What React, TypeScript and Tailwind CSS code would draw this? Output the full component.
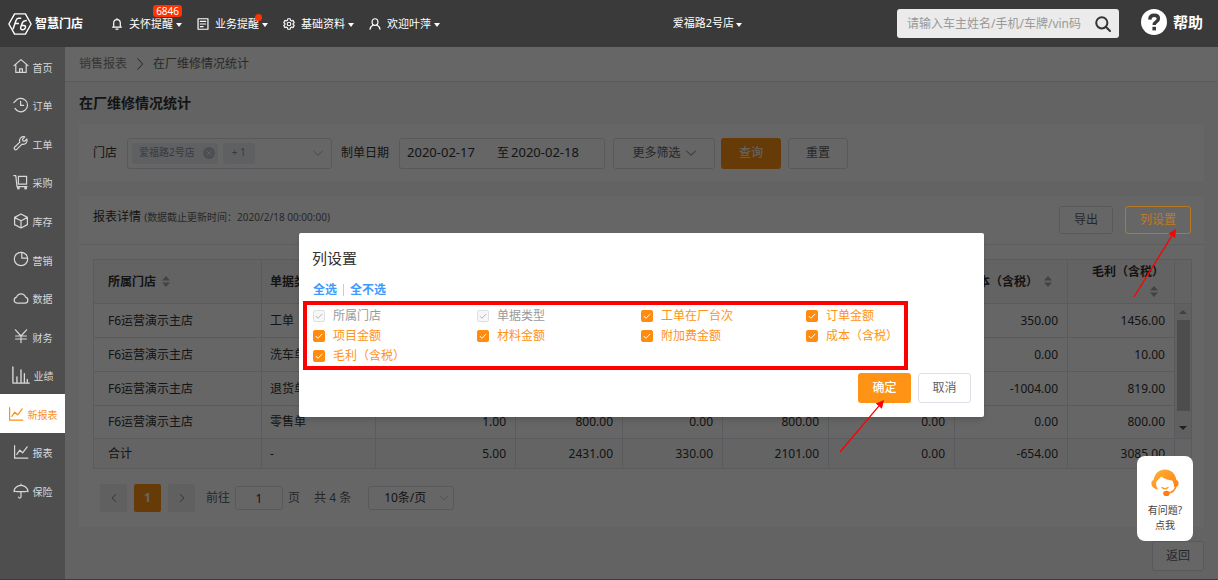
import { useState } from 'react';
import type { ReactNode } from 'react';
import clsx from 'clsx';

type IconProps = { className?: string };

function Icon({ className, children }: { className?: string; children: ReactNode }) {
  return (
    <svg
      viewBox="0 0 16 16"
      className={clsx('shrink-0', className ?? 'h-4 w-4')}
      fill="none"
      stroke="currentColor"
      strokeWidth="1.2"
      strokeLinecap="round"
      strokeLinejoin="round"
      aria-hidden="true"
    >
      {children}
    </svg>
  );
}

const HomeIcon = () => (
  <Icon>
    <path d="M1 7.6 8 1.6l7 6M2.8 6.4v8h10.4v-8M6.6 14.2v-3.4h2.8v3.4" />
  </Icon>
);
const HistoryIcon = () => (
  <Icon>
    <path d="M2.2 4.4A6.7 6.7 0 1 1 2 11.4M.8 5.6l1.4-1.4M7.6 4.4v4h3" />
  </Icon>
);
const WrenchIcon = () => (
  <Icon>
    <path d="M13.9 4 11.6 6.2 9.9 5.8 9.6 4.2l2.2-2.3a4 4 0 0 0-5 5.2l-5.2 5.1a1.4 1.4 0 0 0 2.2 2.2l5.2-5.2A4 4 0 0 0 13.9 4Z" />
  </Icon>
);
const TrolleyIcon = () => (
  <Icon>
    <path d="M.8 1.6h2l1.2 11h10M5.4 2.4h8.2v7.8H5.4Z" />
    <circle cx="5.4" cy="14" r=".9" />
    <circle cx="12.6" cy="14" r=".9" />
  </Icon>
);
const BoxIcon = () => (
  <Icon>
    <path d="M8 1 14.4 4.4v7.2L8 15 1.6 11.6V4.4ZM1.8 4.6 8 7.8l6.2-3.2M8 7.8V15" />
  </Icon>
);
const PieIcon = () => (
  <Icon>
    <circle cx="8" cy="8" r="6.7" />
    <path d="M8.8 1.4v5.8h5.6" />
  </Icon>
);
const CloudIcon = () => (
  <Icon>
    <path d="M4 13.2a3.1 3.1 0 0 1-.4-6.1 4.7 4.7 0 0 1 8.9 0A3.1 3.1 0 0 1 12 13.2Z" />
  </Icon>
);
const YenIcon = () => (
  <Icon>
    <path d="M2.4 1.8 8 8l5.6-6.2M8 8v6.6M2.6 8h10.8M2.6 11h10.8" />
  </Icon>
);
const BarsIcon = () => (
  <Icon className="h-[18px] w-[18px]">
    <path d="M.8.8v14.4h14.6M4.4 15V9.6M8 15V3.4M11 15V6.8M13.6 15v-3" />
  </Icon>
);
const LineIcon = () => (
  <Icon>
    <path d="M1.6 1.6v12.6h13.2M3.8 10.4l3-4.2 2.8 2.6 4.6-6" />
  </Icon>
);
const UmbrellaIcon = () => (
  <Icon>
    <path d="M1 8.6a7 6.2 0 0 1 14 0c-1.400-.6-2.400-.5-3.400.2M1 8.600c1.400-.6 2.400-.5 3.400.2M4.400 8.600h7M8 1v1.400M8 8.600v5a1.200 1.200 0 0 1-2.400.4" />
  </Icon>
);

const BellIcon = ({ className }: IconProps) => (
  <Icon className={className}>
    <path d="M3.600 12V6.600a4.400 4.400 0 0 1 8.800 0V12M2.200 12.200h11.600M6.600 14.800h2.800M8 2.200V.8" strokeWidth="1.6" />
  </Icon>
);
const NoteIcon = ({ className }: IconProps) => (
  <Icon className={className}>
    <path d="M1.4 1h13.2v14H1.4ZM4.4 4.6h7.2M4.4 8h7.2M4.4 11.4h3.8" strokeWidth="1.6" />
  </Icon>
);
const GearIcon = ({ className }: IconProps) => (
  <Icon className={className}>
    <circle cx="8" cy="8" r="2.4" strokeWidth="1.5" />
    <path
      d="m6.4 1-.4 2-1.5.9-2-.7L1 6l1.5 1.3v1.5L1 10l1.5 2.8 2-.7L6 13l.4 2h3.2l.4-2 1.5-.9 2 .7L15 10l-1.5-1.3V7.3L15 6l-1.5-2.8-2 .7L10 3 9.6 1Z"
      strokeWidth="1.5"
    />
  </Icon>
);
const UserIcon = ({ className }: IconProps) => (
  <Icon className={className}>
    <ellipse cx="8" cy="5.4" rx="3.9" ry="4.4" strokeWidth="1.6" />
    <path d="M1.4 15c.3-2.7 2-4.4 4-5.6M14.6 15c-.3-2.7-2-4.4-4-5.6" strokeWidth="1.6" />
  </Icon>
);
const ChevronDown = ({ className }: IconProps) => (
  <Icon className={className ?? 'h-2.5 w-2.5'}>
    <path d="m1 5 7 6.6L15 5" strokeWidth="1.5" />
  </Icon>
);

function Caret() {
  return <span className="mt-[3px] border-x-[3px] border-t-[4px] border-x-transparent border-t-current" />;
}

const NAV = [
  { label: '首页', icon: <HomeIcon /> },
  { label: '订单', icon: <HistoryIcon /> },
  { label: '工单', icon: <WrenchIcon /> },
  { label: '采购', icon: <TrolleyIcon /> },
  { label: '库存', icon: <BoxIcon /> },
  { label: '营销', icon: <PieIcon /> },
  { label: '数据', icon: <CloudIcon /> },
  { label: '财务', icon: <YenIcon /> },
  { label: '业绩', icon: <BarsIcon /> },
  { label: '新报表', icon: <LineIcon />, active: true },
  { label: '报表', icon: <LineIcon /> },
  { label: '保险', icon: <UmbrellaIcon /> },
];

const HEADERS = ['所属门店', '单据类型', '', '', '', '', '', '成本（含税）', '毛利（含税）'];

const ROWS = [
  ['F6运营演示主店', '工单', '', '', '', '', '', '350.00', '1456.00'],
  ['F6运营演示主店', '洗车单', '', '', '', '', '', '0.00', '10.00'],
  ['F6运营演示主店', '退货单', '', '', '', '', '', '-1004.00', '819.00'],
  ['F6运营演示主店', '零售单', '1.00', '800.00', '0.00', '800.00', '0.00', '0.00', '800.00'],
];

const TOTAL = ['合计', '-', '5.00', '2431.00', '330.00', '2101.00', '0.00', '-654.00', '3085.00'];

const COLUMNS = [
  { id: 'store', label: '所属门店', locked: true },
  { id: 'type', label: '单据类型', locked: true },
  { id: 'count', label: '工单在厂台次' },
  { id: 'order', label: '订单金额' },
  { id: 'item', label: '项目金额' },
  { id: 'material', label: '材料金额' },
  { id: 'extra', label: '附加费金额' },
  { id: 'cost', label: '成本（含税）' },
  { id: 'profit', label: '毛利（含税）' },
];

export default function App() {
  return (
    <div className="flex min-h-screen flex-col border-b border-[#3a3a3a] bg-[#4e4e4e] font-['Noto_Sans','Noto_Sans_CJK_SC',sans-serif] text-xs">
      <TopBar />
      <div className="flex flex-1">
        <Sidebar />
        <main className="relative min-w-0 flex-1 bg-[#f7f7f7] text-[#333]">
          <ReportPage />
          <div className="absolute inset-0 z-10 bg-black/60" />
          <ColumnDialog />
          <HelpWidget />
        </main>
      </div>
    </div>
  );
}

function TopBar() {
  return (
    <header className="flex h-[47px] items-center bg-[#3a3a3a] pr-[15px] pl-2 text-[11px] text-white">
      <a href="#" className="flex items-center gap-[3px]">
        <svg viewBox="0 0 24 22" className="h-[22px] w-6" fill="none" stroke="currentColor" strokeWidth="1.4" strokeLinejoin="round">
          <path d="M6.6.9h10.8L23.1 11l-5.7 10.1H6.6L.9 11Z" />
          <path d="M5 16.2 8 7.4c.5-1.5 1.1-2.2 2.4-2.2h2.8M6.8 10.4H11M18.800 7.600l-1.600.1c-1.600.1-2.400.8-2.900 2.200l-1.500 4.200c-.5 1.700.2 2.700 1.700 2.700s2.500-.8 2.900-2.200c.4-1.300-.2-2.200-1.500-2.200h-2.100" strokeWidth="1.5" />
        </svg>
        <span className="text-xs font-bold">智慧门店</span>
      </a>

      <nav className="ml-7 flex flex-1 items-center gap-[15px]">
        <TopMenu icon={<BellIcon className="h-3 w-3" />} label="关怀提醒" badge="6846" />
        <TopMenu icon={<NoteIcon className="h-3 w-3" />} label="业务提醒" dot />
        <TopMenu icon={<GearIcon className="h-3 w-3" />} label="基础资料" />
        <TopMenu icon={<UserIcon className="h-3 w-3" />} label="欢迎叶萍" />
      </nav>

      <button className="mr-[155px] flex items-center gap-[2px]">
        爱福路2号店
        <Caret />
      </button>

      <label className="flex h-[29px] w-[222px] items-center rounded-[3px] bg-[#ebebeb] pr-2 pl-2.5">
        <input
          type="text"
          aria-label="搜索"
          placeholder="请输入车主姓名/手机/车牌/vin码"
          className="min-w-0 flex-1 bg-transparent text-xs text-[#333] outline-none placeholder:text-[#999]"
        />
        <svg viewBox="0 0 16 16" className="h-4 w-4 shrink-0 text-[#333]" fill="none" stroke="currentColor" strokeWidth="2" strokeLinecap="round">
          <circle cx="6.8" cy="6.8" r="5.6" />
          <path d="m11 11 4 4" />
        </svg>
      </label>

      <a href="#" className="ml-[22px] flex items-center gap-[6px] pb-1 text-[15px] leading-[22px] font-bold">
        <svg viewBox="0 0 26 26" className="h-[26px] w-[26px]">
          <circle cx="13" cy="13" r="13" fill="#fff" />
          <path d="M8.8 10.6c.1-2.9 1.8-4.3 4.4-4.3 2.5 0 4.2 1.3 4.2 3.4 0 3-4.2 2.8-4.2 6.3" fill="none" stroke="#3a3a3a" strokeWidth="3.4" />
          <rect x="11.4" y="17.8" width="3.6" height="3.6" fill="#3a3a3a" />
        </svg>
        帮助
      </a>
    </header>
  );
}

function TopMenu({ icon, label, badge, dot }: { icon: ReactNode; label: string; badge?: string; dot?: boolean }) {
  return (
    <button className="relative flex items-center gap-[6px] leading-[14px]">
      {icon}
      <span className="flex items-center gap-[3px]">
        {label}
        <Caret />
      </span>
      {badge && (
        <span className="absolute right-0 bottom-full rounded-[3px] bg-[#ff3300] px-[3px] text-[10px] leading-[12px]">{badge}</span>
      )}
      {dot && <span className="absolute -top-[3px] right-[6px] h-[7px] w-[7px] rounded-full bg-[#ff3300]" />}
    </button>
  );
}

function Sidebar() {
  return (
    <aside className="w-[65px] shrink-0 text-[10px] text-[#d8d8d8]">
      <nav className="grid h-[463px] auto-rows-fr">
        {NAV.map((item) => (
          <a
            key={item.label}
            href="#"
            className={clsx('flex items-center justify-center gap-1', item.active && 'bg-white text-[#ff8f14]')}
          >
            {item.icon}
            <span className="pt-1">{item.label}</span>
          </a>
        ))}
      </nav>
    </aside>
  );
}

function ReportPage() {
  return (
    <>
      <nav className="flex h-[35px] items-center gap-[7px] border-b border-[#e2e2e2] bg-white px-[14px]">
        <a href="#" className="text-[#888]">销售报表</a>
        <Icon className="h-3 w-3 -rotate-90 text-[#777]">
          <path d="m1 5 7 6.6L15 5" strokeWidth="1.4" />
        </Icon>
        <span className="text-[#666]">在厂维修情况统计</span>
      </nav>

      <div className="px-[14px]">
        <h1 className="flex h-[42px] items-center text-sm font-bold">在厂维修情况统计</h1>
        <FilterBar />
        <section className="mt-[14px] bg-white">
          <div className="flex h-[49px] items-center justify-between border-b border-[#ebebeb] pr-[13px] pl-[14px]">
            <h2 className="-mt-1.5">
              报表详情 <small className="text-[10px] text-[#666]">(数据截止更新时间：2020/2/18 00:00:00)</small>
            </h2>
            <div className="flex gap-3">
              <button className="h-7 w-[54px] rounded-[3px] border border-[#dcdfe6] text-[#606266]">导出</button>
              {/* stays above the mask so it can be pointed at */}
              <div className="relative z-20">
                <button className="h-7 w-[66px] rounded-[3px] border border-[#b87822] bg-[#666] text-[#c27a1e]">列设置</button>
                <Arrow className="absolute top-[22px] left-2 h-[70px] w-11" width={44} height={70} />
              </div>
            </div>
          </div>
          <div className="px-[14px] pt-[14px]">
            <ReportTable />
            <Pagination />
          </div>
        </section>
        <div className="flex justify-end pt-[14px] pb-2">
          <button className="h-[30px] rounded-[3px] border border-[#dcdfe6] bg-white px-[13px] text-[#606266]">返回</button>
        </div>
      </div>
    </>
  );
}

function FilterBar() {
  return (
    <section className="flex h-[58px] items-center bg-white px-[14px]">
      <span id="store-label">门店</span>
      <button
        role="combobox"
        aria-expanded="false"
        aria-controls="store-list"
        aria-labelledby="store-label"
        className="ml-2.5 flex h-[31px] w-[205px] items-center gap-[5px] rounded-[3px] border border-[#dcdfe6] pr-2 pl-1 text-[10px] text-[#909399]"
      >
        <span className="flex h-[21px] items-center gap-2 rounded-[3px] bg-[#eef1f6] pr-[3px] pl-[7px]">
          爱福路2号店
          <svg viewBox="0 0 12 12" className="h-3 w-3">
            <circle cx="6" cy="6" r="6" fill="#c0c4cc" />
            <path d="m3.6 3.6 4.8 4.8M8.4 3.6 3.6 8.4" stroke="#eef1f6" />
          </svg>
        </span>
        <span className="flex h-[21px] w-8 items-center justify-center rounded-[3px] bg-[#eef1f6]">+ 1</span>
        <ChevronDown className="ml-auto h-2.5 w-2.5 text-[#b0b4bc]" />
      </button>

      <label htmlFor="date-from" className="ml-[9px]">制单日期</label>
      <div className="ml-2.5 flex h-[31px] w-[206px] items-center rounded-[3px] border border-[#dcdfe6] pl-[7px] text-[13px]">
        <input id="date-from" type="text" defaultValue="2020-02-17" className="w-[90px] outline-none" />
        <span className="text-xs">至</span>
        <input type="text" aria-label="结束日期" defaultValue="2020-02-18" className="w-[80px] pl-0.5 outline-none" />
      </div>

      <button className="ml-2 flex h-[31px] w-[102px] items-center justify-center gap-[5px] rounded-[3px] border border-[#dcdfe6] text-[#606266]">
        更多筛选
        <ChevronDown />
      </button>
      <button className="ml-1.5 h-[31px] w-[60px] rounded-[3px] bg-[#ff9316] text-white">查询</button>
      <button className="ml-[7px] h-[31px] w-[60px] rounded-[3px] border border-[#dcdfe6] text-[#606266]">重置</button>
    </section>
  );
}

function SortIcon({ className }: IconProps) {
  return (
    <svg viewBox="0 0 8 11" className={clsx('inline-block h-[11px] w-2 shrink-0', className)} fill="#a5a8af">
      <path d="M4 0 8 4.6H0ZM4 11 0 6.4h8Z" />
    </svg>
  );
}

function ReportTable() {
  const cell = 'border border-[#e2e4ea] p-0';
  return (
    <table className="w-full table-fixed border-collapse border border-[#dcdfe6]">
      <colgroup>
        <col className="w-[168px]" />
        <col className="w-[114px]" />
        <col className="w-[140px]" />
        <col className="w-[107px]" />
        <col className="w-[100px]" />
        <col className="w-[106px]" />
        <col className="w-[126px]" />
        <col className="w-[113px]" />
        <col className="w-[107px]" />
        <col className="w-[17px]" />
      </colgroup>
      <thead className="bg-[#f7f7f8]">
        <tr className="h-11">
          {HEADERS.map((h, i) => (
            <th key={i} className={cell}>
              {h && (
                <div
                  className={clsx(
                    'flex items-center whitespace-nowrap',
                    i === 0 && 'gap-[6px] pl-[14px]',
                    i === 1 && 'gap-[6px] pl-2',
                    i === 7 && 'justify-end gap-[6px] pr-[15px]',
                    i === 8 && 'flex-col items-end pr-[10px] leading-[20px]'
                  )}
                >
                  {h}
                  <SortIcon className={clsx(i === 8 && 'my-1 mr-[6px]')} />
                </div>
              )}
            </th>
          ))}
          <th className={cell} />
        </tr>
      </thead>
      <tbody>
        {ROWS.map((row, r) => (
          <tr key={row[1]} className={r === 3 ? 'h-[33px]' : 'h-[34px]'}>
            {row.map((value, i) => (
              <td key={i} className={clsx(cell, i === 0 && 'pl-[14px]', i === 1 && 'pl-2', i > 1 && 'pr-[9px] text-right')}>
                {value}
              </td>
            ))}
            {r === 0 && (
              <td rowSpan={4} className="h-px bg-[#f1f1f1] p-0">
                <div className="flex h-full flex-col items-center pt-[6px] pb-2">
                  <span className="border-x-[4px] border-b-[4px] border-x-transparent border-b-[#a3a3a3]" />
                  <span className="mt-[6px] h-[91px] w-[13px] bg-[#c1c1c1]" />
                  <span className="mt-auto border-x-[4px] border-t-[4px] border-x-transparent border-t-[#505050]" />
                </div>
              </td>
            )}
          </tr>
        ))}
      </tbody>
      <tfoot className="bg-[#fafafb]">
        <tr className="h-[30px]">
          {TOTAL.map((value, i) => (
            <td key={i} className={clsx(cell, i === 0 && 'pl-[14px]', i === 1 && 'pl-2', i > 1 && 'pr-[9px] text-right')}>
              {value}
            </td>
          ))}
          <td className={cell} />
        </tr>
      </tfoot>
    </table>
  );
}

function Pagination() {
  const square = 'flex h-7 w-[27px] items-center justify-center rounded-[2px]';
  return (
    <div className="flex h-[58px] items-center pl-[7px] text-[#606266]">
      <button aria-label="上一页" className={clsx(square, 'bg-[#f0f0f2]')}>
        <ChevronDown className="h-2 w-2 rotate-90" />
      </button>
      <button className={clsx(square, 'ml-[7px] bg-[#ff9316] font-bold text-white')}>1</button>
      <button aria-label="下一页" className={clsx(square, 'ml-[7px] bg-[#f0f0f2]')}>
        <ChevronDown className="h-2 w-2 -rotate-90" />
      </button>
      <label className="ml-[11px] flex items-center gap-[5px]">
        前往
        <input
          type="text"
          defaultValue="1"
          className="h-6 w-12 rounded-[3px] border border-[#dcdfe6] text-center text-[#333] outline-none"
        />
        页
      </label>
      <span className="ml-[14px]">共 4 条</span>
      <div className="relative ml-[17px]">
        <select
          aria-label="每页条数"
          className="h-6 w-[86px] appearance-none rounded-[3px] border border-[#dcdfe6] pl-[15px] text-[#333] outline-none"
        >
          <option>10条/页</option>
          <option>20条/页</option>
        </select>
        <ChevronDown className="pointer-events-none absolute top-2 right-1.5 h-2 w-2 text-[#b0b4bc]" />
      </div>
    </div>
  );
}

function ColumnDialog() {
  const [shown, setShown] = useState(COLUMNS.map((c) => c.id));

  const toggle = (id: string) =>
    setShown((list) => (list.includes(id) ? list.filter((x) => x !== id) : [...list, id]));

  return (
    <div className="absolute inset-x-0 top-0 z-20 flex justify-center pt-[186px]">
      <div role="dialog" aria-labelledby="columns-title" className="relative w-[685px] rounded-[2px] bg-white shadow-md">
        <h2 id="columns-title" className="px-[13px] pt-[14px] text-[15px] leading-[22px]">
          列设置
        </h2>
        <div className="flex items-center gap-[6px] px-[14px] pt-3 leading-[18px] font-bold text-[#3d9bff]">
          <button onClick={() => setShown(COLUMNS.map((c) => c.id))}>全选</button>
          <span className="h-3 w-px bg-[#ccc]" />
          <button onClick={() => setShown(COLUMNS.filter((c) => c.locked).map((c) => c.id))}>全不选</button>
        </div>

        <div className="mt-0.5 ml-1 grid w-[605px] grid-cols-[164px_164px_165px_auto] border-4 border-[#ff0000] pt-px pl-[6px]">
          {COLUMNS.map((c) => {
            const on = shown.includes(c.id);
            return (
              <label
                key={c.id}
                className={clsx(
                  'flex h-5 items-center gap-2 whitespace-nowrap',
                  c.locked ? 'text-[#999]' : on ? 'text-[#ff9316]' : 'text-[#606266]'
                )}
              >
                <span className="grid">
                  <input
                    type="checkbox"
                    checked={on}
                    disabled={c.locked}
                    onChange={() => toggle(c.id)}
                    className="h-3 w-3 appearance-none rounded-[2px] border border-[#dcdfe6] [grid-area:1/1] enabled:checked:border-[#ff8c10] enabled:checked:bg-[#ff8c10] disabled:bg-[#f7f7f7]"
                  />
                  {on && (
                    <svg
                      viewBox="0 0 12 12"
                      className={clsx('pointer-events-none h-3 w-3 [grid-area:1/1]', c.locked ? 'text-[#b5b8be]' : 'text-white')}
                      fill="none"
                      stroke="currentColor"
                    >
                      <path d="m2.8 6 2.2 2.3 4.2-4.4" />
                    </svg>
                  )}
                </span>
                {c.label}
              </label>
            );
          })}
        </div>

        <div className="flex justify-end gap-[7px] px-[13px] pt-[3px] pb-[14px]">
          <button className="h-[30px] w-[53px] rounded-[3px] bg-[#ff9316] font-medium text-white">确定</button>
          <button className="h-[30px] w-[53px] rounded-[3px] border border-[#dcdfe6] text-[#606266]">取消</button>
        </div>
        <Arrow className="absolute right-[99px] -bottom-9 h-[54px] w-[46px]" width={46} height={54} />
      </div>
    </div>
  );
}

// Pointer running from the bottom left corner to the top right one
function Arrow({ className, width, height }: { className: string; width: number; height: number }) {
  const len = Math.hypot(width - 2, height - 2);
  const ux = (width - 2) / len;
  const uy = -(height - 2) / len;
  const tipX = width - 1;
  const tipY = 1;
  const baseX = tipX - ux * 8;
  const baseY = tipY - uy * 8;
  return (
    <svg viewBox={`0 0 ${width} ${height}`} className={clsx('pointer-events-none', className)} fill="#ff0000" aria-hidden="true">
      <line x1="1" y1={height - 1} x2={baseX} y2={baseY} stroke="#ff0000" strokeWidth="1.3" />
      <polygon
        points={`${tipX},${tipY} ${baseX - uy * 4},${baseY + ux * 4} ${baseX + uy * 4},${baseY - ux * 4}`}
      />
    </svg>
  );
}

function HelpWidget() {
  return (
    <button className="absolute right-[25px] bottom-[38px] z-30 flex w-[56px] flex-col items-center rounded-lg bg-white pt-[13px] pb-2 text-[10px] leading-[15px] text-[#444]">
      <svg viewBox="0 0 28 28" className="mb-[6px] h-7 w-7" aria-hidden="true">
        <defs>
          <linearGradient id="hair" x1="0" y1="0" x2="1" y2="1">
            <stop offset="0" stopColor="#ffb43a" />
            <stop offset="1" stopColor="#ff7d12" />
          </linearGradient>
        </defs>
        <path
          d="M2.6 11C3.6 4.6 8 .5 14 .5s10.4 4.1 11.4 10.5c1.5.4 2.2 1.6 2.2 3.3 0 2.2-1.2 3.7-3.4 3.7-1 0-1.2-.5-1.3-1.5-.2-2-.6-3.4-1.7-5-4.2-.2-8-1.5-11-3.900C8.800 9.700 5.900 11.200 5.200 13.500c-.3 2 .1 4.200 1.700 6.900-3.500-.3-6.500-2.500-6.500-6.100 0-1.700.7-2.900 2.200-3.300Z"
          fill="url(#hair)"
        />
        <path d="M25 17.4c-1.1 3.6-3.6 5.9-7.4 6.6" fill="none" stroke="#ff8a18" strokeWidth="1.6" />
        <ellipse cx="15.4" cy="24.4" rx="3.2" ry="2.7" fill="#ff7d12" />
        <path d="M11 18.4c1.7 1.5 4.3 1.5 6 0" fill="none" stroke="#ff9d20" strokeWidth="1.3" strokeLinecap="round" />
      </svg>
      <span>有问题?</span>
      <span>点我</span>
    </button>
  );
}
